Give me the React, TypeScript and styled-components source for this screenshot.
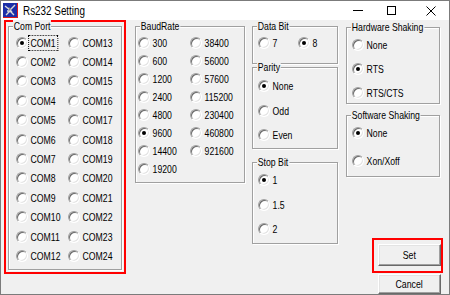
import React from 'react';
import styled, { createGlobalStyle, css } from 'styled-components';

const GlobalStyle = createGlobalStyle`
  html, body {
    margin: 0;
    padding: 0;
    background: #ffffff;
  }
  body {
    width: 450px;
    height: 295px;
    overflow: hidden;
  }
`;

// the old dialog font is much narrower than Arial, squeeze it horizontally
const narrow = css`
    display: inline-block;
    transform: scaleX(0.79);
    transform-origin: 0 50%;
`;

const comPorts = Array.from({ length: 24 }, (_, i) => `COM${i + 1}`);
// column-major order: COM1..COM12 left, COM13..COM24 right
const comOrder = Array.from({ length: 12 }, (_, r) => [comPorts[r], comPorts[r + 12]]).flat();

const baudRates = ['300', '38400', '600', '56000', '1200', '57600', '2400', '115200', '4800', '230400', '9600', '460800', '14400', '921600', '19200'];

const AppIcon = () => (
    <svg width="15" height="15" viewBox="0 0 15 15">
        <rect x="0" y="0" width="15" height="15" fill="#1c2fa8" />
        <path d="M2 3 L7 7 L12 2 M3 12 L7 8 L11 12 M5 5 L9 9 M4 8 h3" stroke="#d8d8d8" strokeWidth="1.4" fill="none" />
        <path d="M6 4 L8 6 L6 8 Z" fill="#8a8a8a" />
        <path d="M14.5 0 V14.5 H0" stroke="#e01818" strokeWidth="1" fill="none" />
    </svg>
);

const Radio = ({ label, checked, focused }: { label: string; checked?: boolean; focused?: boolean }) => (
    <RadioRow>
        <RadioCircle $checked={checked} />
        <RadioText $focused={focused}>{label}</RadioText>
    </RadioRow>
);

const App = () => {
    return (
        <>
            <GlobalStyle />
            <Window>
                <TitleBar>
                    <IconBox><AppIcon /></IconBox>
                    <TitleText><span>Rs232 Setting</span></TitleText>
                    <CaptionButton $w={27}><MinGlyph /></CaptionButton>
                    <CaptionButton $w={41}><MaxGlyph /></CaptionButton>
                    <CaptionButton $w={37}>
                        <svg width="10" height="10" viewBox="0 0 10 10">
                            <path d="M0.5 0.5 L9.5 9.5 M9.5 0.5 L0.5 9.5" stroke="#000" strokeWidth="1" />
                        </svg>
                    </CaptionButton>
                </TitleBar>

                <Client>
                    <Highlight $w={122} $h={254}>
                        <Group $w={114} $h={244} $mt={4}>
                            <Legend>Com Port</Legend>
                            <RadioGrid $cols="52px 52px" $row={19.4} $pad="6px 0 0 7px">
                                {comOrder.map(c => (
                                    <Radio key={c} label={c} checked={c === 'COM1'} focused={c === 'COM1'} />
                                ))}
                            </RadioGrid>
                        </Group>
                    </Highlight>

                    <Column $w={110} $ml={9}>
                        <Group $w={110} $h={157} $mt={6}>
                            <Legend>BaudRate</Legend>
                            <RadioGrid $cols="52px 51px" $row={18} $pad="7px 0 0 2px">
                                {baudRates.map(b => (
                                    <Radio key={b} label={b} checked={b === '9600'} />
                                ))}
                            </RadioGrid>
                        </Group>
                    </Column>

                    <Column $w={86} $ml={7}>
                        <Group $w={86} $h={38} $mt={6}>
                            <Legend>Data Bit</Legend>
                            <RadioGrid $cols="40px 40px" $row={18} $pad="7px 0 0 5px">
                                <Radio label="7" />
                                <Radio label="8" checked />
                            </RadioGrid>
                        </Group>
                        <Group $w={86} $h={82} $mt={3}>
                            <Legend>Parity</Legend>
                            <RadioGrid $cols="1fr" $row={24.5} $pad="6px 0 0 5px">
                                <Radio label="None" checked />
                                <Radio label="Odd" />
                                <Radio label="Even" />
                            </RadioGrid>
                        </Group>
                        <Group $w={86} $h={82} $mt={13}>
                            <Legend>Stop Bit</Legend>
                            <RadioGrid $cols="1fr" $row={24.5} $pad="5px 0 0 5px">
                                <Radio label="1" checked />
                                <Radio label="1.5" />
                                <Radio label="2" />
                            </RadioGrid>
                        </Group>
                    </Column>

                    <Column $w={97} $ml={8}>
                        <Group $w={94} $h={77} $mt={7}>
                            <Legend>Hardware Shaking</Legend>
                            <RadioGrid $cols="1fr" $row={24} $pad="5px 0 0 5px">
                                <Radio label="None" />
                                <Radio label="RTS" checked />
                                <Radio label="RTS/CTS" />
                            </RadioGrid>
                        </Group>
                        <Group $w={94} $h={62} $mt={11}>
                            <Legend>Software Shaking</Legend>
                            <RadioGrid $cols="1fr" $row={28} $pad="3px 0 0 5px">
                                <Radio label="None" checked />
                                <Radio label="Xon/Xoff" />
                            </RadioGrid>
                        </Group>
                        <ButtonStack>
                            <Highlight $w={71} $h={35} $pad="4px 0 0 4px">
                                <PushButton $h={22}><ButtonText>Set</ButtonText></PushButton>
                            </Highlight>
                            <PushButton $h={20} $mr={2} $mt={1}><ButtonText>Cancel</ButtonText></PushButton>
                        </ButtonStack>
                    </Column>
                </Client>
            </Window>
        </>
    );
}

const Window = styled('div')`
    width: 450px;
    height: 295px;
    box-sizing: border-box;
    border: 1px solid #7b7b7b;
    display: flex;
    flex-direction: column;
    background: #f0f0f0;
    font-family: "Liberation Sans", Arial, sans-serif;
    font-size: 11px;
    color: #000;
`

const TitleBar = styled('div')`
    height: 19px;
    flex: none;
    display: flex;
    align-items: center;
    background: #ffffff;
    padding-left: 2px;
`

const IconBox = styled('div')`
    width: 15px;
    height: 15px;
    display: flex;
`

const TitleText = styled('div')`
    margin-left: 5px;
    flex: 1;
    font-size: 12.5px;
    color: #000;
    span {
        ${narrow}
    }
`

const CaptionButton = styled('div')<{ $w: number }>`
    width: ${p => p.$w}px;
    height: 19px;
    display: flex;
    align-items: center;
    justify-content: center;
`

const MinGlyph = styled('span')`
    width: 10px;
    height: 1px;
    background: #000;
`

const MaxGlyph = styled('span')`
    width: 9px;
    height: 9px;
    box-sizing: border-box;
    border: 1px solid #000;
`

const Client = styled('div')`
    flex: 1;
    display: flex;
    padding-left: 3px;
    min-height: 0;
`

const Highlight = styled('div')<{ $w: number; $h: number; $pad?: string }>`
    width: ${p => p.$w}px;
    height: ${p => p.$h}px;
    box-sizing: border-box;
    border: 2px solid #ff0000;
    padding: ${p => p.$pad || '0 2px'};
    flex: none;
`

const Column = styled('div')<{ $w: number; $ml: number }>`
    width: ${p => p.$w}px;
    margin-left: ${p => p.$ml}px;
    display: flex;
    flex-direction: column;
    flex: none;
`

const Group = styled('div')<{ $w: number; $h: number; $mt: number }>`
    position: relative;
    width: ${p => p.$w}px;
    height: ${p => p.$h}px;
    margin-top: ${p => p.$mt}px;
    box-sizing: border-box;
    border: 1px solid #a0a0a0;
    box-shadow: 1px 1px 0 #ffffff, inset 1px 1px 0 #ffffff;
    flex: none;
`

const Legend = styled('span')`
    position: absolute;
    top: -7px;
    left: 4px;
    padding: 0 1px;
    line-height: 13px;
    background: #f0f0f0;
    white-space: nowrap;
    ${narrow}
`

const RadioGrid = styled('div')<{ $cols: string; $row: number; $pad: string }>`
    display: grid;
    grid-template-columns: ${p => p.$cols};
    grid-auto-rows: ${p => p.$row}px;
    padding: ${p => p.$pad};
`

const RadioRow = styled('label')`
    display: flex;
    align-items: center;
    gap: 1px;
    white-space: nowrap;
`

const RadioCircle = styled('span')<{ $checked?: boolean }>`
    position: relative;
    width: 12px;
    height: 12px;
    flex: none;
    box-sizing: border-box;
    border-radius: 50%;
    background: #ffffff;
    border: 1px solid;
    border-color: #a0a0a0 #ffffff #ffffff #a0a0a0;
    box-shadow: inset 1px 1px 0 #6a6a6a, inset -1px -1px 0 #e3e3e3;
    &::after {
        content: '';
        display: ${p => (p.$checked ? 'block' : 'none')};
        position: absolute;
        left: 3px;
        top: 3px;
        width: 4px;
        height: 4px;
        border-radius: 50%;
        background: #000;
    }
`

const RadioText = styled('span')<{ $focused?: boolean }>`
    padding: 1px 2px;
    line-height: 12px;
    outline: ${p => (p.$focused ? '1px dotted #000' : 'none')};
    outline-offset: 0;
    ${narrow}
`

const ButtonStack = styled('div')`
    margin-top: auto;
    display: flex;
    flex-direction: column;
    align-items: flex-end;
`

const PushButton = styled('button')<{ $h: number; $mr?: number; $mt?: number }>`
    width: 63px;
    height: ${p => p.$h}px;
    margin-right: ${p => p.$mr || 0}px;
    margin-top: ${p => p.$mt || 0}px;
    padding: 0;
    box-sizing: border-box;
    display: flex;
    align-items: center;
    justify-content: center;
    background: #f0f0f0;
    font: inherit;
    color: #000;
    border: 1px solid;
    border-color: #ffffff #696969 #696969 #ffffff;
    box-shadow: inset -1px -1px 0 #a0a0a0, inset 1px 1px 0 #e3e3e3;
`

const ButtonText = styled('span')`
    display: inline-block;
    transform: scaleX(0.8);
`

export default App;
